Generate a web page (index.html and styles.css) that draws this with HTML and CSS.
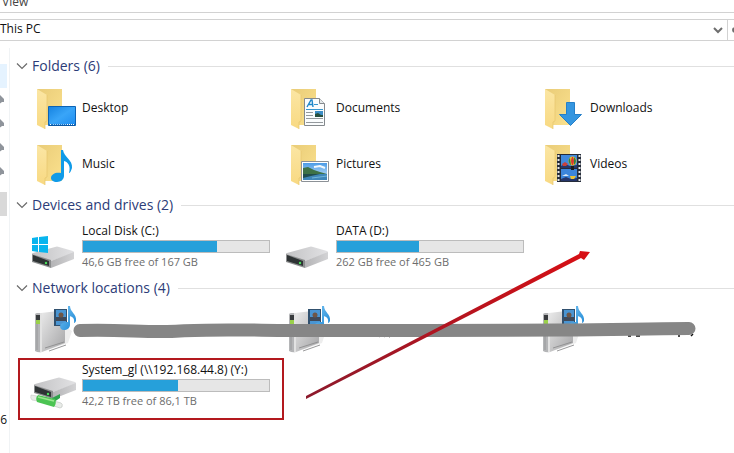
FILE: index.html
```
<!DOCTYPE html>
<html lang="en">
<head>
    <meta charset="UTF-8">
    <meta name="viewport" content="width=device-width, initial-scale=1.0">
    <title>This PC</title>
    <link rel="stylesheet" href="styles.css">
</head>
<body>

    <!-- Shared icon shapes -->
    <svg class="defs" aria-hidden="true">
        <defs>
            <linearGradient id="folderBack" x1="0" y1="0" x2="1" y2="1">
                <stop offset="0" stop-color="#e9cc78"/>
                <stop offset="1" stop-color="#fbe18e"/>
            </linearGradient>
            <linearGradient id="folderFlap" x1="0" y1="0" x2="0" y2="1">
                <stop offset="0" stop-color="#fbe6a4"/>
                <stop offset="1" stop-color="#f8d982"/>
            </linearGradient>
            <linearGradient id="screen" x1="0" y1="0" x2="1" y2="1">
                <stop offset="0" stop-color="#1582e0"/>
                <stop offset=".5" stop-color="#39a5f8"/>
                <stop offset="1" stop-color="#1d8cf0"/>
            </linearGradient>
            <linearGradient id="driveTop" x1="0" y1="0" x2="1" y2="0">
                <stop offset="0" stop-color="#c2c2c4"/>
                <stop offset="1" stop-color="#e2e2e4"/>
            </linearGradient>
            <linearGradient id="driveSide" x1="0" y1="0" x2="1" y2="0">
                <stop offset="0" stop-color="#b4b4b6"/>
                <stop offset="1" stop-color="#d3d3d5"/>
            </linearGradient>
            <linearGradient id="serverSide" x1="0" y1="0" x2="1" y2="1">
                <stop offset="0" stop-color="#eaeaea"/>
                <stop offset="1" stop-color="#a4a4a6"/>
            </linearGradient>
            <linearGradient id="sky" x1="0" y1="0" x2="0" y2="1">
                <stop offset="0" stop-color="#4b9be6"/>
                <stop offset="1" stop-color="#d6ebf8"/>
            </linearGradient>
            <linearGradient id="noteBlue" x1="0" y1="0" x2="1" y2="1">
                <stop offset="0" stop-color="#7cc6f3"/>
                <stop offset="1" stop-color="#1683d3"/>
            </linearGradient>
            <linearGradient id="arrowRed" x1="0" y1="1" x2="1" y2="0">
                <stop offset="0" stop-color="#8c1a2c"/>
                <stop offset="1" stop-color="#d80f14"/>
            </linearGradient>

            <symbol id="folder" viewBox="0 0 48 48">
                <path d="M7 5h25v36H14z" fill="url(#folderBack)"/>
                <path d="M7 5l10 6v26l-2 1v7l-8-4z" fill="url(#folderFlap)"/>
                <path d="M17 11v26l-2 1v7" fill="none" stroke="#e6c66d" stroke-width=".7"/>
            </symbol>
            <symbol id="drive" viewBox="0 0 48 48">
                <path d="M2 31q0-1 1-1L25 24q2-1 4 0l14 4q1 0 1 2L21 38z" fill="url(#driveTop)"/>
                <path d="M21 38l23-9v7l-23 9z" fill="url(#driveSide)"/>
                <path d="M2 31l19 6v8L2 39z" fill="#8b8d8e"/>
                <path d="M3 32l16 6v5L3 38z" fill="#2e3334"/>
                <circle cx="16" cy="40" r="1.200" fill="#49e05c"/>
            </symbol>
            <symbol id="server" viewBox="0 0 48 48">
                <path d="M18 44l20-7 4-12-6-4z" fill="#ededed"/>
                <path d="M11 7l17-2 7 3v29L12 46z" fill="url(#serverSide)"/>
                <path d="M5 9q0-2 2-2h5v39q-4 1-7-1z" fill="#b4b5b7"/>
                <path d="M10 7h2v39h-2z" fill="#e2e2e2"/>
                <path d="M6 9h4v5H6z" fill="#383b3d"/>
                <path d="M6 14h4v4H6z" fill="#9ad14a"/>
                <path d="M7 18v26" stroke="#97989a"/>
                <path d="M15 42l19-6M19 45l17-6" stroke="#8d8d8f" stroke-width=".9"/>
                <path d="M24 3h13v17H24z" fill="#31516f"/>
                <path d="M26 4h10v15H26z" fill="#4a95d2"/>
                <path d="M26 11h10v4H26z" fill="#3f4a5a"/>
                <circle cx="31" cy="9" r="2.500" fill="#6f5646"/>
                <path d="M38 0h2c0 6 7 8 6 15-1 2-2 2-2 2 1-5-2-6-4-7v9c0 3-3 5-6 5s-4-2-4-4c1-3 4-4 8-4z" fill="url(#noteBlue)"/>
            </symbol>
            <symbol id="chevron" viewBox="0 0 12 12">
                <path d="M1 3.500l5 5 5-5" fill="none" stroke="#6b6b6b" stroke-width="1.200"/>
            </symbol>
            <symbol id="pin" viewBox="0 0 8 12">
                <path d="M0 1l4 4v3H0z" fill="#8f949b"/>
                <path d="M0 7l-2 4 4-3z" fill="#8f949b"/>
            </symbol>
        </defs>
    </svg>

    <div class="window">
        <div class="ribbon"><button type="button" class="tab">View</button></div>

        <div class="toolbar">
            <div class="address">
                <span class="path">This PC</span>
                <button type="button" class="history" aria-label="Previous locations">
                    <svg width="10" height="8" viewBox="0 0 10 8"><path d="M1 2l4 4 4-4" fill="none" stroke="#6e6e6e" stroke-width="2"/></svg>
                </button>
            </div>
            <button type="button" class="refresh" aria-label="Refresh">
                <svg width="2" height="6" viewBox="0 0 2 6"><path d="M2 1a3 3 0 0 0 0 4" fill="none" stroke="#6e6e6e" stroke-width="2"/></svg>
            </button>
        </div>

        <div class="main">
            <aside class="sidebar">
                <div class="nav hover"></div>
                <div class="nav"><svg class="pin"><use href="#pin"/></svg></div>
                <div class="nav"><svg class="pin"><use href="#pin"/></svg></div>
                <div class="nav"><svg class="pin"><use href="#pin"/></svg></div>
                <div class="nav"><svg class="pin"><use href="#pin"/></svg></div>
                <div class="nav selected"></div>
                <div class="nav count">6</div>
            </aside>

            <main class="content">
                <section>
                    <h2><svg class="chevron"><use href="#chevron"/></svg>Folders (6)</h2>
                    <div class="tiles">
                        <div class="tile">
                            <svg class="icon" viewBox="0 0 48 48">
                                <use href="#folder"/>
                                <path d="M18.500 22.500h27v19h-27z" fill="url(#screen)" stroke="#0d63b5"/>
                                <path d="M19 41h26" stroke="#0b4e94" stroke-width="1"/>
                                <path d="M20 40.500h2M37 40.500h8" stroke="#fff" stroke-dasharray="1 1"/>
                                <path d="M23 40.500h13" stroke="#9ad0ff" stroke-dasharray="1 1"/>
                            </svg>
                            <span class="name">Desktop</span>
                        </div>
                        <div class="tile">
                            <svg class="icon" viewBox="0 0 48 48">
                                <use href="#folder"/>
                                <path d="M20.500 14.500h15l5 5v22h-20z" fill="#fafcfd" stroke="#84898d"/>
                                <path d="M35.500 14.500v5h5" fill="#e4e8ea" stroke="#84898d"/>
                                <path d="M23 23l4-7h1l1 7M25 20.500h4" fill="none" stroke="#1e86c8" stroke-width="1.400"/>
                                <path d="M30 20.500h4M22 25.500h17" stroke="#3696cf"/>
                                <path d="M22 28.500h7M22 31.500h7M22 34.500h17M22 38.500h17" stroke="#94999d"/>
                                <path d="M31 27h8v6h-8z" fill="#3c8ec6"/>
                                <path d="M31 33v-3l3-1 3 2h2v2z" fill="#26503f"/>
                            </svg>
                            <span class="name">Documents</span>
                        </div>
                        <div class="tile">
                            <svg class="icon" viewBox="0 0 48 48">
                                <use href="#folder"/>
                                <path d="M28.500 18.500h8v12h7L32.500 41.500l-11-11h7z" fill="#3596e0" stroke="#2680c9"/>
                            </svg>
                            <span class="name">Downloads</span>
                        </div>
                        <div class="tile">
                            <svg class="icon" viewBox="0 0 48 48">
                                <use href="#folder"/>
                                <path d="M31 10h2c1 7 10 10 9 18-1 3-2 5-3 5 2-7-1-11-5-12v15c0 3-3 6-7 6s-6-2-6-4c0-4 5-6 10-5z" fill="#109be8"/>
                            </svg>
                            <span class="name">Music</span>
                        </div>
                        <div class="tile">
                            <svg class="icon" viewBox="0 0 48 48">
                                <use href="#folder"/>
                                <path d="M17.500 21.500h27v20h-27z" fill="#fff" stroke="#8c9196"/>
                                <path d="M19 23h24v17H19z" fill="url(#sky)"/>
                                <path d="M19 28l5-1 6 3 6 2 7 2v1H19z" fill="#3e7247"/>
                                <path d="M19 34h24v6H19z" fill="#3f86b8"/>
                                <path d="M19 34h17l-9 2-8 2z" fill="#214d4c"/>
                                <path d="M28 38l15-2" stroke="#71b6da"/>
                                <path d="M30 27l6-1 5 2" fill="none" stroke="#f3f9fd" stroke-width="2"/>
                            </svg>
                            <span class="name">Pictures</span>
                        </div>
                        <div class="tile">
                            <svg class="icon" viewBox="0 0 48 48">
                                <use href="#folder"/>
                                <path d="M19 14h24v28H19z" fill="#252c3a"/>
                                <path d="M23 15h16v13H23z" fill="#4189dc"/>
                                <path d="M23 29h16v12H23z" fill="#3c85da"/>
                                <path d="M20.500 15v27M41.500 15v27" stroke="#e8e8e8" stroke-width="2" stroke-dasharray="2 2"/>
                                <path d="M23 26l4-2 5 2 7-1v3H23zM23 39l5-2 5 2 6-1v3H23z" fill="#25366a"/>
                                <path d="M24 24l3-2 3 2-2 2h-3z" fill="#c9413b"/>
                                <ellipse cx="34.500" cy="21" rx="4" ry="4.500" fill="#f0c52c"/>
                                <path d="M32 17.500q-3 4 1 8zM36 17q4 4 0 8z" fill="#2c8048"/>
                                <path d="M34 17q-2 4 0 8h1q2-4 0-8z" fill="#d83930"/>
                                <path d="M33 26h3v4h-3z" fill="#1c1c1c"/>
                                <path d="M24 36l4-2 3 2z" fill="#dbe9f6"/>
                                <path d="M32 36h6l-2 3h-3z" fill="#edc335"/>
                            </svg>
                            <span class="name">Videos</span>
                        </div>
                    </div>
                </section>

                <section>
                    <h2><svg class="chevron"><use href="#chevron"/></svg>Devices and drives (2)</h2>
                    <div class="tiles">
                        <div class="tile">
                            <svg class="icon" viewBox="0 0 48 48">
                                <use href="#drive"/>
                                <path d="M2 15l6-1v7H2zM9 14l9-1v8H9zM2 22h6v7l-6-1zM9 22h9v8l-9-1z" fill="#09b5ee"/>
                            </svg>
                            <div class="drive">
                                <label class="name" for="driveC">Local Disk (C:)</label>
                                <progress id="driveC" value="72" max="100"></progress>
                                <span class="free">46,6 GB free of 167 GB</span>
                            </div>
                        </div>
                        <div class="tile">
                            <svg class="icon" viewBox="0 0 48 48"><use href="#drive"/></svg>
                            <div class="drive">
                                <label class="name" for="driveD">DATA (D:)</label>
                                <progress id="driveD" value="44" max="100"></progress>
                                <span class="free">262 GB free of 465 GB</span>
                            </div>
                        </div>
                    </div>
                </section>

                <section>
                    <h2><svg class="chevron"><use href="#chevron"/></svg>Network locations (4)</h2>
                    <div class="tiles">
                        <div class="tile"><svg class="icon" viewBox="0 0 48 48"><use href="#server"/></svg></div>
                        <div class="tile"><svg class="icon" viewBox="0 0 48 48"><use href="#server"/></svg></div>
                        <div class="tile"><svg class="icon" viewBox="0 0 48 48"><use href="#server"/></svg></div>
                        <div class="tile">
                            <svg class="icon" viewBox="0 0 48 48">
                                <g transform="translate(2 -8)"><use href="#drive"/></g>
                                <path d="M22 36l8-4v4l-6 4z" fill="#2fa34c"/>
                                <path d="M1 33l6 1 1 5-6-1q-2-2-1-5z" fill="#e9ece9" stroke="#c6cac6" stroke-width=".6"/>
                                <path d="M24 39l7 2q2 1 1 4l-2 1-6-2z" fill="#e9ece9" stroke="#b9bdb9" stroke-width=".6"/>
                                <path d="M8 33l17 4q2 4-1 8L7 40q-2-4 1-7z" fill="#4cc453"/>
                                <path d="M8 35l16 4" stroke="#9be98f" stroke-width="1.500"/>
                            </svg>
                            <div class="drive">
                                <label class="name" for="driveY">System_gl (\\192.168.44.8) (Y:)</label>
                                <progress id="driveY" value="51" max="100"></progress>
                                <span class="free">42,2 TB free of 86,1 TB</span>
                            </div>
                        </div>
                    </div>
                </section>
            </main>
        </div>

        <!-- Markup drawn over the window: hidden names, red frame and arrow -->
        <svg class="marks" width="734" height="453" viewBox="0 0 734 453" aria-hidden="true">
            <path d="M182 336h2M338 335q2 2 4 0M371 336h2M380 335l-1 2M385 335l-1 2M391 335l-2 2M628 336h3M636 336h4M679 335v2M693 334l-2 2" fill="none" stroke="#111" stroke-width="1.500"/>
            <path d="M80 330.500C120 329 150 333 180 331S240 330 290 330.500S500 330 560 330S640 328.500 689 328.500" fill="none" stroke="#868686" stroke-width="13" stroke-linecap="round"/>
            <path d="M19 359h264v60H19z" fill="none" stroke="#b3191e" stroke-width="2"/>
            <path d="M306 396L579 254l1-3 10 1-6 8-3-2L306 399z" fill="url(#arrowRed)"/>
        </svg>
    </div>

</body>
</html>
```
FILE: styles.css
```
* {
    box-sizing: border-box;
}
body {
    margin: 0;
    font-family: "Segoe UI", "Open Sans", "Noto Sans", sans-serif;
    font-size: 12px;
    line-height: 16px;
    color: #111;
    background-color: #fff;
}
button {
    padding: 0;
    border: none;
    background: none;
    font: inherit;
    color: inherit;
}
svg {
    display: block;
    flex: none;
}
.defs {
    position: absolute;
    width: 0;
    height: 0;
}
.window {
    position: relative;
    display: flex;
    flex-direction: column;
    min-height: 100vh;
    overflow: hidden;
}

/* Ribbon and address bar */
.ribbon {
    display: flex;
    align-items: flex-end;
    height: 13px;
    padding: 0 0 2px 2px;
    border-bottom: 1px solid #d2d2d2;
    overflow: hidden;
}
.tab {
    color: #444;
}
.toolbar {
    display: flex;
    height: 22px;
    margin-top: 6px;
    border-top: 1px solid #d2d2d2;
    border-bottom: 1px solid #d2d2d2;
}
.address {
    display: flex;
    flex: 1;
    align-items: center;
    justify-content: space-between;
    padding-right: 4px;
    border-right: 1px solid #d2d2d2;
}
.path {
    padding-bottom: 2px;
}
.refresh {
    display: flex;
    align-items: center;
    justify-content: flex-end;
    width: 6px;
}

/* Navigation pane */
.main {
    display: flex;
    flex: 1;
}
.sidebar {
    width: 10px;
    margin-top: 7px;
    padding-top: 16px;
    border-right: 1px solid #f0f3f5;
    overflow: hidden;
}
.nav {
    display: flex;
    align-items: center;
    width: 7px;
    height: 24px;
}
.nav.hover {
    background-color: #e5f3ff;
}
.nav.selected {
    margin-top: 8px;
    background-color: #d9d9d9;
}
.nav.count {
    justify-content: flex-end;
    margin-top: 192px;
}
.pin {
    width: 8px;
    height: 12px;
}

/* Item groups */
.content {
    flex: 1;
    min-width: 0;
    padding-top: 12px;
}
h2 {
    display: flex;
    align-items: center;
    gap: 4px;
    height: 27px;
    margin: 0;
    padding: 0 0 1px 6px;
    font-size: 14px;
    font-weight: normal;
    line-height: 20px;
    color: #2c3c78;
}
h2::after {
    content: "";
    flex: 1;
    height: 1px;
    margin-left: 4px;
    background-color: #e0e0e0;
}
.chevron {
    width: 12px;
    height: 12px;
}
.tiles {
    display: grid;
    grid-template-columns: 254px 254px 1fr;
    grid-auto-rows: 56px;
    padding-left: 20px;
}
.tile {
    display: flex;
    align-items: center;
    gap: 4px;
}
.icon {
    width: 48px;
    height: 48px;
}
.drive {
    display: flex;
    flex-direction: column;
    width: 188px;
    padding-bottom: 2px;
}
.free {
    font-size: 11px;
    color: #6d6d6d;
}
progress {
    appearance: none;
    display: block;
    width: 100%;
    height: 13px;
    margin: 1px 0;
    border: 1px solid #bcbcbc;
    background-color: #e6e6e6;
}
progress::-webkit-progress-bar {
    background-color: #e6e6e6;
}
progress::-webkit-progress-value {
    background-color: #26a0da;
}

.marks {
    position: absolute;
    top: 0;
    left: 0;
    pointer-events: none;
}
```
